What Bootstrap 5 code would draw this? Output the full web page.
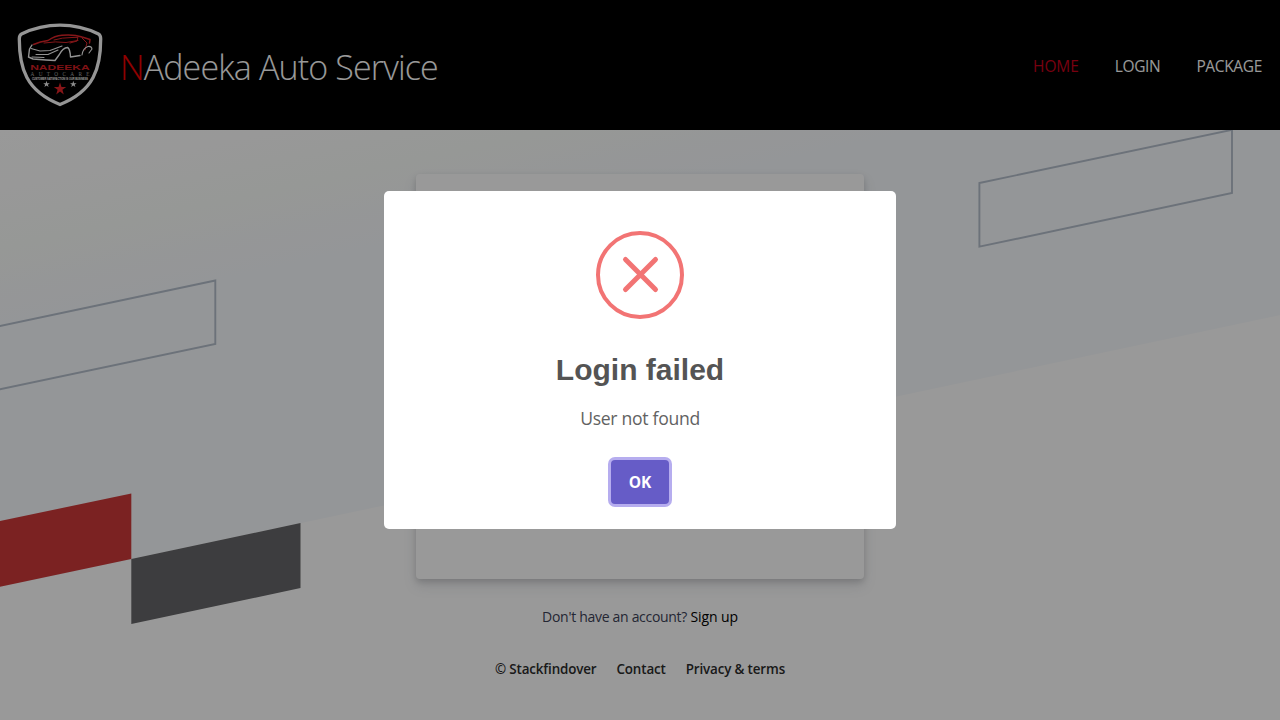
<!DOCTYPE html>
<html lang="en">
<head>
<meta charset="utf-8">
<meta name="viewport" content="width=device-width, initial-scale=1">
<title>NAdeeka Auto Service</title>
<link href="https://cdn.jsdelivr.net/npm/bootstrap@5.3.0/dist/css/bootstrap.min.css" rel="stylesheet">
<style>
body { font-family: "Open Sans", "Noto Sans", sans-serif; height: 100vh; background: #fff; }
.site-header { height: 130px; background: #000; padding: 0 18px; }
.site-header svg { overflow: visible; }
.brand-text { font-size: 34px; font-weight: 300; line-height: 1; color: #fff; letter-spacing: -.86px; margin: 4px 0 0 18px; white-space: nowrap; }
.brand-text span { color: #f00000; }
.site-nav { gap: 36px; font-size: 15.5px; line-height: 24px; margin-top: 1px; }
.site-nav a { color: #fff; text-decoration: none; white-space: nowrap; letter-spacing: -.35px; }
.site-nav a.current { color: #c8001c; letter-spacing: -.1px; }
.scene { top: 0; left: 0; width: 1280px; height: 590px; }
.login-card { width: 448px; height: 405px; margin-top: 44px; border-radius: 4px; background: #fff; box-shadow: 0 7px 14px rgba(60,66,87,.12), 0 3px 6px rgba(0,0,0,.15); }
.signup { font-size: 14px; line-height: 20px; margin-top: 28px; color: #3c4257; white-space: nowrap; letter-spacing: -.3px; }
.signup a { color: #000; text-decoration: none; letter-spacing: -.1px; }
.legal { font-size: 13.4px; line-height: 20px; margin-top: 32px; gap: 20px; font-weight: 600; letter-spacing: -.14px; }
.legal a { color: #2c2c2c; text-decoration: none; white-space: nowrap; }
.veil { inset: 0; background: rgba(0,0,0,.4); z-index: 10; }
.alert-box { width: 512px; height: 338px; border-radius: 5px; background: #fff; padding-top: 40px; }
.alert-title { font: bold 30px/36px "Liberation Sans", Arial, sans-serif; color: #545454; margin: 33px 0 0; }
.alert-text { font-size: 17.6px; line-height: 28px; color: #626262; margin: 16px 0 0; letter-spacing: -.3px; }
.ok-btn, .ok-btn:hover, .ok-btn:focus { width: 58px; height: 44px; margin-top: 28px; padding: 2px 0 0; border: 0; border-radius: 4px; background: #665cc7; color: #fff; font-size: 15.5px; font-weight: 700; box-shadow: 0 0 0 3px #b6adef; }
</style>
</head>
<body class="d-flex flex-column overflow-hidden">
<header class="site-header d-flex align-items-center justify-content-between flex-shrink-0">
  <div class="d-flex align-items-center">
    <svg width="84" height="84" viewBox="18 23 84 84" fill="none">
      <path d="M60 25.200C47 25.200 34 28 21.500 34C19.500 35 19.300 36.500 19.300 39C19.300 68 26 91 60 104.500C94 91 100.700 68 100.700 39C100.700 36.500 100.500 35 98.500 34C86 28 73 25.200 60 25.200Z" stroke="#f8f8f8" stroke-width="3.300"/>
      <g stroke="#e0262a" stroke-linecap="round" stroke-linejoin="round">
        <path d="M33.500 44.500Q40 41.500 48 40.500Q55 35.800 62 35.300Q74 34.300 82 37L90 39.500L89.500 43" stroke-width="1.500"/>
        <path d="M54 40Q62 37.500 72 37.500L78 37.300L77 41L70 43M44 43Q56 41 66 42.500L78 40.500M82 38L87 43L85 50" stroke-width="1"/>
      </g>
      <g stroke="#f5f5f5" stroke-linecap="round" stroke-linejoin="round">
        <path d="M32 45L29.500 49L28.500 57L33 59L46 60L55 60.500L59 55Q63 47.500 67.500 47.500Q70 48.500 70.500 57L80 55.500" stroke-width="1.400"/>
        <path d="M31 48.500L40 51L50 50.500L62 46M36 54.500L48 54.500L58 50M32 57L44 57.500" stroke-width="1.100"/>
        <path d="M82 55Q83 48 88 46.500Q91.500 46 92 49L89 53" stroke-width="1.100"/>
      </g>
      <text x="30.200" y="70" textLength="59.500" lengthAdjust="spacingAndGlyphs" font-family="Liberation Sans" font-weight="700" font-size="7.500" fill="#d61f24">NADEEKA</text>
      <text x="30.500" y="76.300" textLength="59" font-family="Liberation Serif" font-size="5.300" fill="#aaa">AUTOCARE</text>
      <text x="32" y="80" textLength="56" lengthAdjust="spacingAndGlyphs" font-family="Liberation Sans" font-size="3.400" font-weight="700" fill="#fff">CUSTOMER SATISFACTION IS OUR BUSINESS</text>
      <path fill="#e22428" d="M60 82.500L61.500 87H66.200L62.400 89.800L63.800 94.400L60 91.600L56.200 94.400L57.600 89.800L53.800 87H58.500Z"/>
      <path fill="#eee" d="M46.500 80.800L47.300 83.200H49.800L47.800 84.700L48.600 87.100L46.500 85.600L44.400 87.100L45.200 84.700L43.200 83.200H45.700ZM73.300 80.800L74.100 83.200H76.600L74.600 84.700L75.400 87.100L73.300 85.600L71.200 87.100L72 84.700L70 83.200H72.500Z"/>
    </svg>
    <h1 class="brand-text"><span>N</span>Adeeka Auto Service</h1>
  </div>
  <nav class="site-nav d-flex"><a href="#" class="current">HOME</a><a href="#">LOGIN</a><a href="#">PACKAGE</a></nav>
</header>

<main class="position-relative flex-grow-1 d-flex flex-column align-items-center">
  <svg class="scene position-absolute" viewBox="0 130 1280 590">
    <defs>
      <linearGradient id="band" gradientUnits="userSpaceOnUse" x1="0" y1="130" x2="40" y2="318">
        <stop offset="0" stop-color="#fff"/><stop offset=".6" stop-color="#fbfdfb"/><stop offset="1" stop-color="#f7fafd"/>
      </linearGradient>
    </defs>
    <path d="M0 130H1280V315L0 587Z" fill="url(#band)"/>
    <g fill="none" stroke="#b4becb" stroke-width="1.900">
      <path d="M-5 327L215.300 280.500V344L-5 390.300"/>
      <path d="M979.400 183L1232 129.800V193L979.400 246.700Z"/>
    </g>
    <path d="M0 521L131.300 493.500V559L0 586.800Z" fill="#cd3a3a"/>
    <path d="M131.300 559L300.500 523V588L131.300 624Z" fill="#666669"/>
  </svg>
  <section class="login-card position-relative flex-shrink-0"></section>
  <p class="signup position-relative mb-0">Don't have an account? <a href="#">Sign up</a></p>
  <div class="legal position-relative d-flex"><a href="#">© Stackfindover</a><a href="#">Contact</a><a href="#">Privacy &amp; terms</a></div>
</main>

<div class="veil position-fixed d-flex align-items-center justify-content-center">
  <div class="alert-box d-flex flex-column align-items-center" role="dialog" aria-labelledby="alert-title">
    <svg class="flex-shrink-0" width="88" height="88" fill="none" stroke="#f27474">
      <circle cx="44" cy="44" r="42" stroke-width="4"/>
      <path d="M29.500 28.500L59.500 58.500M59.500 28.500L29.500 58.500" stroke-width="5" stroke-linecap="round"/>
    </svg>
    <h2 class="alert-title" id="alert-title">Login failed</h2>
    <p class="alert-text">User not found</p>
    <button class="btn ok-btn" type="button">OK</button>
  </div>
</div>
<script src="https://cdn.jsdelivr.net/npm/bootstrap@5.3.0/dist/js/bootstrap.bundle.min.js"></script>
</body>
</html>
